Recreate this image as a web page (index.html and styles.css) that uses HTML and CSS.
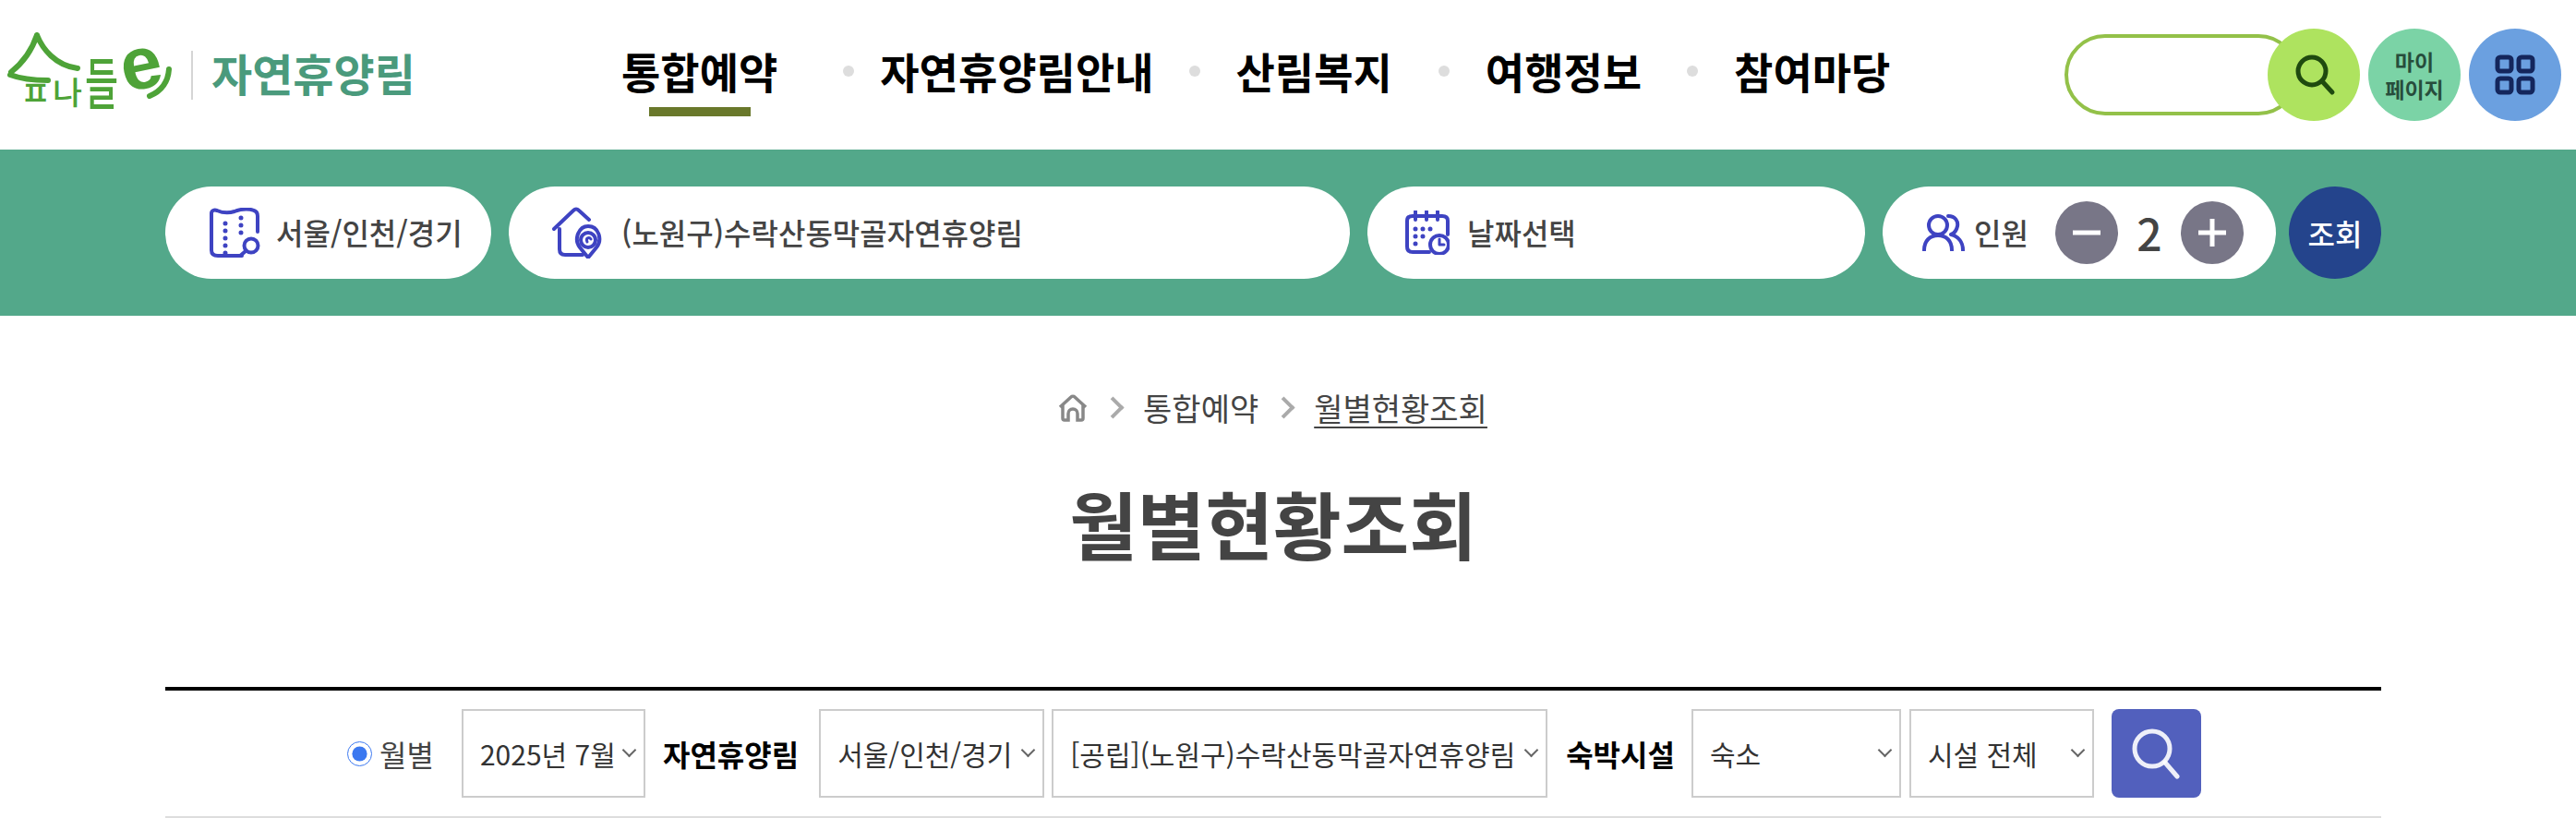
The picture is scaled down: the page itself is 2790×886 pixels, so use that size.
FILE: index.html
```html
<!DOCTYPE html>
<html lang="ko">
<head>
    <meta charset="UTF-8">
    <title>월별현황조회 - 숲나들e</title>
    <link rel="stylesheet" href="styles.css">
</head>
<body>

    <!-- Header -->
    <header class="header">
        <a class="logo" href="#">
            <svg class="logo-mark" width="186" height="112" viewBox="0 -12 186 112">
                <path class="logo-line" d="M38 5 C33 20 24 34 10 45 M38 5 C44 20 58 38 82 41"/>
                <path class="logo-line" d="M9 48 C22 53 36 54 50 54"/>
                <text class="logo-char" x="20" y="81" font-size="38" textLength="33" lengthAdjust="spacingAndGlyphs">ㅍ</text>
                <text class="logo-char" x="55" y="80" font-size="34" textLength="32" lengthAdjust="spacingAndGlyphs">나</text>
                <text class="logo-char" x="90" y="80" font-size="60" textLength="36" lengthAdjust="spacingAndGlyphs">들</text>
                <text class="logo-e" x="0" y="0" font-size="80" transform="translate(134 67) rotate(-12)">e</text>
                <path class="logo-line" d="M181 42 C180 56 172 66 160 71"/>
            </svg>
            <span class="logo-name">자연휴양림</span>
        </a>
        <nav class="gnb-wrap">
            <ul class="gnb">
                <li class="on"><a href="#">통합예약</a></li>
                <li><a href="#">자연휴양림안내</a></li>
                <li><a href="#">산림복지</a></li>
                <li><a href="#">여행정보</a></li>
                <li><a href="#">참여마당</a></li>
            </ul>
        </nav>
        <div class="util">
            <input class="top-search" type="text" aria-label="검색">
            <button class="circle circle-search" type="button" aria-label="검색">
                <svg width="46" height="46" viewBox="0 0 46 46"><circle cx="20" cy="19" r="15"/><path d="M31 30 L42 42"/></svg>
            </button>
            <a class="circle circle-my" href="#">마이<br>페이지</a>
            <button class="circle circle-menu" type="button" aria-label="전체메뉴">
                <svg width="44" height="44" viewBox="0 0 44 44">
                    <rect x="3" y="3" width="15" height="15" rx="3"/>
                    <rect x="26" y="3" width="15" height="15" rx="3"/>
                    <rect x="3" y="26" width="15" height="15" rx="3"/>
                    <rect x="26" y="26" width="15" height="15" rx="3"/>
                </svg>
            </button>
        </div>
    </header>

    <!-- Quick reservation bar -->
    <section class="quick">
        <div class="quick-inner">
            <div class="pill pill-region">
                <svg class="ico" width="56" height="54" viewBox="0 0 56 54">
                    <path d="M36 52 H10 C5 52 3 50 3 46 V6 C3 3 6 2 9 3 C16 6 22 6 28 4 C36 1 44 1 49 3 C52 4 53 6 53 9 V26"/>
                    <circle cx="46" cy="41" r="7.5"/>
                    <path d="M40 47 L33 53"/>
                    <path class="dots" d="M18 17 V50 M35 11 V32"/>
                </svg>
                <span>서울/인천/경기</span>
            </div>
            <div class="pill pill-forest">
                <svg class="ico" width="56" height="56" viewBox="0 0 56 56">
                    <path d="M2 24 L23 4 C25 2 27 2 29 4 L40 14 M8 24 V46 C8 50 10 52 14 52 H33"/>
                    <path d="M39 55 L30 44 C23 35 29 21 39 21 C50 21 55 35 48 44 Z"/>
                    <circle cx="39" cy="36" r="8"/>
                    <path class="thin" d="M38 38 C36 34 40 32 42 35"/>
                </svg>
                <span>(노원구)수락산동막골자연휴양림</span>
            </div>
            <div class="pill pill-date">
                <svg class="ico" width="48" height="48" viewBox="0 0 48 48">
                    <path d="M26 45 H8 C4 45 2 43 2 39 V11 C2 8 4 6 8 6 H40 C44 6 46 8 46 11 V26"/>
                    <path d="M11 1 V10 M23 1 V10 M35 1 V10"/>
                    <circle cx="37" cy="37" r="10"/>
                    <path class="thin" d="M37 31 V37 H42"/>
                    <path class="dots" d="M11 20 H35 M11 28 H24 M11 36 H18"/>
                </svg>
                <span>날짜선택</span>
            </div>
            <div class="pill pill-people">
                <svg class="ico" width="46" height="40" viewBox="0 0 46 40">
                    <circle cx="17" cy="12" r="10"/>
                    <path d="M2 39 C2 29 8 23 17 23 C26 23 32 29 32 39"/>
                    <path d="M28 2 C36 2 39 8 38 13 C37 18 34 21 31 22 C39 24 44 30 44 39"/>
                </svg>
                <span class="people-label">인원</span>
                <button class="step" type="button" aria-label="감소">
                    <svg width="32" height="32" viewBox="0 0 32 32"><path d="M1 16 H31"/></svg>
                </button>
                <span class="people-num">2</span>
                <button class="step" type="button" aria-label="증가">
                    <svg width="32" height="32" viewBox="0 0 32 32"><path d="M1 16 H31 M16 1 V31"/></svg>
                </button>
            </div>
            <button class="btn-query" type="button">조회</button>
        </div>
    </section>

    <!-- Content -->
    <main class="content">
        <div class="breadcrumb">
            <svg class="crumb-home" width="32" height="30" viewBox="0 0 32 30">
                <path d="M2 14 L14 3 C15 2 17 2 18 3 L30 14 M5 11 V26 C5 27.500 6 28 7 28 H11 V21 C11 18 13 16 16 16 C19 16 21 18 21 21 V28 H25 C26 28 27 27.500 27 26 V11"/>
            </svg>
            <span class="crumb-arrow"></span>
            <a href="#">통합예약</a>
            <span class="crumb-arrow"></span>
            <a class="current" href="#">월별현황조회</a>
        </div>

        <h1 class="page-title">월별현황조회</h1>

        <form class="search-row">
            <label class="radio-wrap"><input type="radio" name="view" checked> 월별</label>
            <span class="sel sel-month"><select><option>2025년 7월</option></select></span>
            <strong class="field-name">자연휴양림</strong>
            <span class="sel sel-region"><select><option>서울/인천/경기</option></select></span>
            <span class="sel sel-forest"><select><option>[공립](노원구)수락산동막골자연휴양림</option></select></span>
            <strong class="field-name field-stay">숙박시설</strong>
            <span class="sel sel-stay"><select><option>숙소</option></select></span>
            <span class="sel sel-all"><select><option>시설 전체</option></select></span>
            <button class="btn-search" type="button" aria-label="검색">
                <svg width="54" height="56" viewBox="0 0 54 56"><circle cx="23" cy="23" r="19"/><path d="M37 38 L50 53"/></svg>
            </button>
        </form>
    </main>

</body>
</html>
```

FILE: styles.css
```css
html, body {
    margin: 0;
    padding: 0;
    height: 886px;
    overflow: hidden;
    background-color: white;
    color: #444;
    font-family: "Noto Sans CJK KR", "Noto Sans", sans-serif;
}

a {
    color: inherit;
    text-decoration: none;
}

button {
    border: none;
    padding: 0;
    cursor: pointer;
    font-family: inherit;
}

/* header */
.header {
    height: 162px;
    display: flex;
    align-items: center;
    padding: 0 16px 0 2px;
    box-sizing: border-box;
}

.logo {
    display: flex;
    align-items: center;
    width: 443px;
    flex: none;
}

.logo-mark {
    flex: none;
    margin-bottom: 8px;
}

.logo-line {
    fill: none;
    stroke: #4ea338;
    stroke-width: 6;
    stroke-linecap: round;
}

.logo-char {
    fill: #4ea338;
    font-weight: 500;
}

.logo-e {
    fill: #4ea338;
    font-family: "Liberation Sans", sans-serif;
    font-weight: 700;
}

.logo-name {
    margin-left: 19px;
    padding-left: 20px;
    border-left: 2px solid #d5d5d5;
    height: 53px;
    line-height: 46px;
    font-size: 48px;
    font-weight: 700;
    color: #4a9a7c;
    white-space: nowrap;
}

.gnb-wrap {
    margin-bottom: 10px;
}

.gnb {
    list-style: none;
    display: flex;
    margin: 0 0 0 228px;
    padding: 0;
    font-size: 46px;
    font-weight: 700;
    color: black;
    line-height: 60px;
    white-space: nowrap;
}

.gnb li {
    position: relative;
}

.gnb li:nth-child(2) {
    margin-left: 111px;
}

.gnb li:nth-child(3) {
    margin-left: 89px;
}

.gnb li:nth-child(4) {
    margin-left: 101px;
}

.gnb li:nth-child(5) {
    margin-left: 100px;
}

.gnb li + li::before {
    content: "";
    position: absolute;
    left: -51px;
    top: 25px;
    width: 12px;
    height: 12px;
    border-radius: 50%;
    background-color: #ddd;
}

.gnb li:nth-child(2)::before {
    left: -40px;
}

.gnb .on::after {
    content: "";
    position: absolute;
    left: 30px;
    bottom: -20px;
    width: 110px;
    height: 10px;
    background-color: #69782b;
}

.util {
    margin-left: auto;
    display: flex;
    align-items: center;
}

.top-search {
    width: 254px;
    height: 88px;
    box-sizing: border-box;
    border: 4px solid #93c149;
    border-radius: 44px;
    background: white;
    outline: none;
}

.circle {
    width: 100px;
    height: 100px;
    border-radius: 50%;
    display: flex;
    align-items: center;
    justify-content: center;
    flex: none;
    margin-left: 9px;
}

.circle svg {
    fill: none;
    stroke-width: 5;
    stroke-linecap: round;
}

.circle-search {
    margin-left: -34px;
    background-color: #aee35f;
    position: relative;
}

.circle-search svg {
    stroke: #1f4a0f;
    margin-left: 2px;
}

.circle-my {
    background-color: #7bd3a6;
    color: #274d3c;
    font-size: 23px;
    font-weight: 700;
    line-height: 30px;
    text-align: center;
}

.circle-menu {
    background-color: #6ba0e0;
}

.circle-menu svg {
    stroke: #14265c;
}

/* quick bar */
.quick {
    height: 180px;
    background-color: #53a88a;
    display: flex;
    align-items: center;
    box-sizing: border-box;
    padding-left: 179px;
}

.quick-inner {
    display: flex;
    align-items: center;
    width: 2400px;
    color: #444;
    font-size: 32px;
    font-weight: 500;
    line-height: 44px;
}

.pill {
    height: 100px;
    border-radius: 50px;
    background-color: white;
    display: flex;
    align-items: center;
    box-sizing: border-box;
    margin-right: 19px;
    white-space: nowrap;
}

.pill span {
    margin-bottom: 3px;
}

.ico {
    flex: none;
    fill: none;
    stroke: #3e43c2;
    stroke-width: 4;
    stroke-linecap: round;
    stroke-linejoin: round;
}

.ico .dots {
    stroke-dasharray: 0 8;
    stroke-width: 5;
}

.ico .thin {
    stroke-width: 3;
}

.pill-region {
    width: 353px;
    padding-left: 47px;
    gap: 17px;
}

.pill-forest {
    width: 911px;
    padding-left: 47px;
    gap: 19px;
}

.pill-date {
    width: 539px;
    padding-left: 41px;
    gap: 19px;
}

.pill-people {
    width: 426px;
    padding-left: 43px;
    margin-right: 14px;
}

.people-label {
    margin-left: 10px;
    width: 88px;
}

.step {
    width: 68px;
    height: 68px;
    border-radius: 50%;
    background-color: #787687;
    display: flex;
    align-items: center;
    justify-content: center;
    flex: none;
}

.step svg {
    fill: none;
    stroke: white;
    stroke-width: 5;
}

.people-num {
    width: 68px;
    text-align: center;
    font-size: 48px;
    font-weight: 500;
}

.btn-query {
    width: 100px;
    height: 100px;
    border-radius: 50%;
    background-color: #24448c;
    color: white;
    font-size: 32px;
    font-weight: 500;
    flex: none;
}

/* content */
.content {
    width: 2400px;
    margin-left: 179px;
}

.breadcrumb {
    display: flex;
    align-items: center;
    justify-content: center;
    height: 50px;
    margin-top: 74px;
    padding-left: 3px;
    font-size: 34px;
    color: #444;
}

.crumb-home {
    fill: none;
    stroke: #888;
    stroke-width: 3.5;
    margin-left: -4px;
    margin-top: 2px;
}

.crumb-arrow {
    width: 13px;
    height: 13px;
    margin: 0 24px 0 19px;
    border-top: 4px solid #aaa;
    border-right: 4px solid #aaa;
    transform: rotate(45deg);
}

.breadcrumb .current {
    text-decoration: underline;
    text-underline-offset: 6px;
    text-decoration-thickness: 2px;
}

.page-title {
    margin: 39px 0 0;
    height: 120px;
    line-height: 120px;
    font-size: 80px;
    font-weight: 700;
    text-align: center;
    color: #444;
}

.search-row {
    margin-top: 119px;
    height: 142px;
    box-sizing: border-box;
    border-top: 4px solid black;
    border-bottom: 2px solid #ddd;
    padding-left: 2px;
    display: flex;
    align-items: center;
    justify-content: center;
    font-size: 32px;
    color: #333;
}

.radio-wrap {
    display: flex;
    align-items: center;
    gap: 8px;
    margin-right: 30px;
    color: #444;
}

.radio-wrap input {
    width: 27px;
    height: 27px;
    margin: 0;
    accent-color: #3b78f0;
}

.field-name {
    font-size: 32px;
    font-weight: 700;
    color: black;
    margin: 0 22px 0 19px;
}

.field-stay {
    margin: 0 18px 0 20px;
}

.sel {
    position: relative;
    display: block;
    height: 96px;
    flex: none;
}

.sel::after {
    content: "";
    position: absolute;
    right: 12px;
    top: 39px;
    width: 9px;
    height: 9px;
    border-right: 2px solid #666;
    border-bottom: 2px solid #666;
    transform: rotate(45deg);
    pointer-events: none;
}

.sel select {
    appearance: none;
    width: 100%;
    height: 100%;
    box-sizing: border-box;
    border: 2px solid #ccc;
    border-radius: 0;
    background: white;
    padding: 0 0 0 18px;
    font-family: inherit;
    font-size: 30px;
    color: #333;
}

.sel-month {
    width: 199px;
}

.sel-region {
    width: 244px;
    margin-right: 8px;
}

.sel-forest {
    width: 537px;
}

.sel-stay {
    width: 227px;
    margin-right: 9px;
}

.sel-all {
    width: 200px;
}

.btn-search {
    width: 97px;
    height: 96px;
    margin-left: 19px;
    border-radius: 8px;
    background-color: #5260bd;
    display: flex;
    align-items: center;
    justify-content: center;
    flex: none;
}

.btn-search svg {
    fill: none;
    stroke: white;
    stroke-opacity: 0.9;
    stroke-width: 5;
    stroke-linecap: round;
}
```
